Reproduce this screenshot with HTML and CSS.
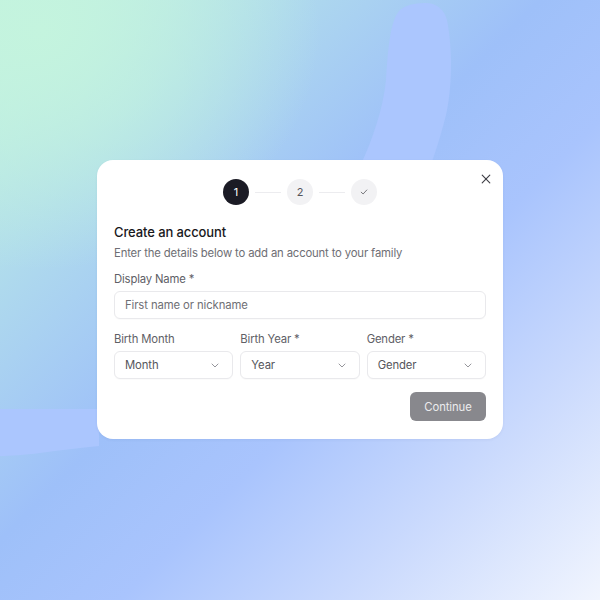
FILE: index.html
```html
<!DOCTYPE html>
<html lang="en">
<head>
<meta charset="utf-8">
<title>Create an account</title>
<link rel="stylesheet" href="styles.css">
</head>
<body>
<div class="scene">
  <svg class="blobs" width="600" height="600" viewBox="0 0 600 600" aria-hidden="true">
    <path d="M362 162 C372 140 383 110 386 80 C388 50 390 20 400 10 Q408 3 425 3 Q442 3 447 20 C453 50 452 90 446 115 C441 135 436 150 432 162 Z" fill="#abc6fe"/>
    <path d="M0 409 L99 409 L99 446 C80 448 60 450 40 453 C25 455 10 456 0 456 Z" fill="#abc6fe"/>
  </svg>
  <div class="card">
    <button class="close" aria-label="Close">
      <svg width="10" height="10" viewBox="0 0 10 10"><path d="M1.2 1.2 L8.8 8.8 M8.8 1.2 L1.2 8.8" stroke="#3f3f46" stroke-width="1.15" stroke-linecap="round" fill="none"/></svg>
    </button>
    <div class="stepper">
      <div class="step active">1</div>
      <div class="line"></div>
      <div class="step">2</div>
      <div class="line"></div>
      <div class="step">
        <svg width="8" height="8" viewBox="0 0 8 8"><path d="M1.2 4.2 L3.1 6 L6.8 2" stroke="#6b6b70" stroke-width="0.9" fill="none" stroke-linecap="round" stroke-linejoin="round"/></svg>
      </div>
    </div>
    <h1 class="title">Create an account</h1>
    <p class="subtitle">Enter the details below to add an account to your family</p>
    <div class="field first">
      <label class="label">Display Name *</label>
      <div class="input">First name or nickname</div>
    </div>
    <div class="row">
      <div class="field">
        <label class="label">Birth Month</label>
        <div class="select"><span>Month</span><svg class="chev" width="8" height="5" viewBox="0 0 8 5"><path d="M1 1 L4 4 L7 1" stroke="#8a8a90" stroke-width="0.9" fill="none" stroke-linecap="round" stroke-linejoin="round"/></svg></div>
      </div>
      <div class="field">
        <label class="label">Birth Year *</label>
        <div class="select"><span>Year</span><svg class="chev" width="8" height="5" viewBox="0 0 8 5"><path d="M1 1 L4 4 L7 1" stroke="#8a8a90" stroke-width="0.9" fill="none" stroke-linecap="round" stroke-linejoin="round"/></svg></div>
      </div>
      <div class="field">
        <label class="label">Gender *</label>
        <div class="select"><span>Gender</span><svg class="chev" width="8" height="5" viewBox="0 0 8 5"><path d="M1 1 L4 4 L7 1" stroke="#8a8a90" stroke-width="0.9" fill="none" stroke-linecap="round" stroke-linejoin="round"/></svg></div>
      </div>
    </div>
    <div class="actions">
      <button class="continue">Continue</button>
    </div>
  </div>
</div>
</body>
</html>
```
FILE: styles.css
```css
* { box-sizing: border-box; }
html, body { margin: 0; padding: 0; }
body {
  width: 600px;
  height: 600px;
  overflow: hidden;
  font-family: Inter, "Noto Sans", sans-serif;
}
.scene {
  position: relative;
  width: 600px;
  height: 600px;
  background:
    radial-gradient(ellipse 280px 240px at 40px 30px, rgba(196,244,222,1) 0%, rgba(196,244,222,0.6) 45%, rgba(196,244,222,0) 100%),
    linear-gradient(135deg, #c3f3df 0%, #b0dcec 22%, #9ec0f9 45%, #a9c4fd 60%, #c9d9fd 78%, #f1f5fe 100%);
  display: flex;
  justify-content: center;
  padding-top: 160px;
}
.blobs {
  position: absolute;
  left: 0;
  top: 0;
}
.card {
  position: relative;
  width: 406px;
  height: 279px;
  background: #fff;
  border-radius: 16px;
  padding: 19px 17px 18px;
  box-shadow: 0 1px 3px rgba(30, 50, 110, 0.06);
  display: flex;
  flex-direction: column;
}
.close {
  position: absolute;
  top: 14px;
  right: 12px;
  width: 10px;
  height: 10px;
  padding: 0;
  border: 0;
  background: none;
  display: flex;
}
.stepper {
  display: flex;
  align-items: center;
  justify-content: center;
  gap: 6px;
  height: 26px;
}
.step {
  width: 26px;
  height: 26px;
  border-radius: 50%;
  background: #f2f2f4;
  color: #55555b;
  font-size: 11px;
  display: flex;
  align-items: center;
  justify-content: center;
}
.step.active {
  background: #1b1b25;
  color: #fff;
}
.line {
  width: 26px;
  height: 1px;
  background: #ececef;
}
.title {
  margin: 18px 0 0;
  font-size: 13px;
  font-weight: 500;
  color: #18181b;
  line-height: 18px;
  letter-spacing: -0.1px;
}
.subtitle {
  margin: 4px 0 0;
  font-size: 11.3px;
  color: #6e6e74;
  line-height: 16px;
  letter-spacing: -0.15px;
}
.field {
  display: flex;
  flex-direction: column;
  gap: 5px;
  margin-top: 9px;
}
.field.first { margin-top: 11px; }
.label {
  font-size: 11.3px;
  color: #606066;
  line-height: 14px;
  letter-spacing: -0.15px;
}
.input, .select {
  height: 28px;
  border: 1px solid #e9e9ec;
  border-radius: 6px;
  background: #fff;
  display: flex;
  align-items: center;
  padding: 0 10px;
  font-size: 11.3px;
  color: #6f6f75;
  letter-spacing: -0.1px;
  box-shadow: 0 1px 1px rgba(0,0,0,0.02);
}
.row {
  display: grid;
  grid-template-columns: repeat(3, 1fr);
  gap: 7px;
  margin-top: 4px;
}
.select {
  justify-content: space-between;
  padding-right: 13px;
  color: #56565c;
}
.chev { display: block; }
.actions {
  display: flex;
  justify-content: flex-end;
  margin-top: 13px;
}
.continue {
  width: 76px;
  height: 29px;
  border: 0;
  border-radius: 6px;
  background: #88888d;
  color: #ececee;
  font-family: Inter, "Noto Sans", sans-serif;
  font-size: 11.3px;
  letter-spacing: -0.1px;
}
```
